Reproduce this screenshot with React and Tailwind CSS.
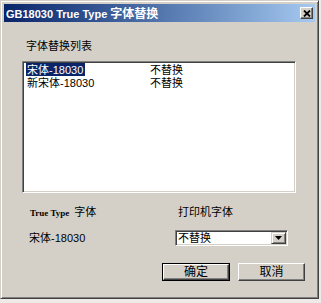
const cjk = { fontFamily: '"Liberation Sans", "Noto Sans CJK SC", sans-serif' };

function CloseButton() {
  return (
    <div className="w-[13px] h-[12px] bg-[#d4d0c8] border border-t-white border-l-white border-r-[#404040] border-b-[#404040] shadow-[inset_-1px_-1px_0_#808080] flex items-center justify-center">
      <svg width="8" height="7" viewBox="0 0 8 7">
        <path d="M1 0.5 L7 6.5 M7 0.5 L1 6.5" stroke="#000" strokeWidth="1.8" />
      </svg>
    </div>
  );
}

function PushButton({ label, isDefault }) {
  const bevel = 'bg-[#d4d0c8] border border-t-white border-l-white border-r-[#404040] border-b-[#404040] shadow-[inset_-1px_-1px_0_#808080]';
  return (
    <div className={isDefault ? 'border border-black' : ''}>
      <div className={`${bevel} ${isDefault ? 'w-[66px] h-[16px]' : 'w-[67px] h-[18px]'} flex items-center justify-center text-[12px] leading-none text-black`} style={cjk}>
        {label}
      </div>
    </div>
  );
}

export default function App() {
  const rows = [
    { name: '宋体-18030', printer: '不替换', selected: true },
    { name: '新宋体-18030', printer: '不替换' },
  ];

  return (
    <div className="w-[321px] h-[303px] bg-[#ecebe8]">
      <div className="w-[319px] h-[299px] bg-[#d4d0c8] border border-t-[#d4d0c8] border-l-[#d4d0c8] border-r-[#404040] border-b-[#404040] shadow-[inset_1px_1px_0_#fff,inset_-1px_-1px_0_#808080] p-[3px] flex flex-col">
        {/* Title bar */}
        <div className="h-[18px] shrink-0 bg-gradient-to-r from-[#0a246a] to-[#a6caf0] flex items-center justify-between pl-[2px] pr-[2px]">
          <div className="flex items-baseline text-white font-bold">
            <span className="text-[11px] leading-none" style={{ fontFamily: '"Liberation Sans", sans-serif' }}>GB18030 True Type</span>
            <span className="text-[12px] leading-none ml-[3px]" style={{ fontFamily: '"Noto Sans CJK SC", sans-serif' }}>字体替换</span>
          </div>
          <CloseButton />
        </div>

        {/* Client area */}
        <div className="flex flex-col pl-[18px] text-black" style={cjk}>
          <div className="mt-[18px] ml-[4px] text-[11px] leading-[13px]">字体替换列表</div>

          <div className="mt-[8px] w-[274px] h-[132px] bg-white border border-t-[#808080] border-l-[#808080] border-r-white border-b-white shadow-[inset_1px_1px_0_#404040,inset_-1px_-1px_0_#d4d0c8] pt-[1px] pl-[3px]">
            {rows.map((r) => (
              <div key={r.name} className="flex h-[13px] items-center text-[11px] leading-[12px]">
                <div className="w-[124px]">
                  <span className={r.selected ? 'bg-[#0a246a] text-white pl-[1px] pr-[2px] py-[0.5px]' : 'pl-[1px]'}>{r.name}</span>
                </div>
                <div>{r.printer}</div>
              </div>
            ))}
          </div>

          <div className="grid grid-cols-[153px_1fr] mt-[13px] leading-[13px]">
            <div className="pl-[8px] flex items-baseline">
              <span className="text-[9px] font-bold" style={{ fontFamily: '"Liberation Serif", serif' }}>True Type</span>
              <span className="text-[11px] ml-[5px]">字体</span>
            </div>
            <div className="pl-[3px] text-[11px]">打印机字体</div>
          </div>

          <div className="grid grid-cols-[153px_1fr] mt-[10px] items-center">
            <div className="pl-[7px] text-[11px] leading-[13px]">宋体-18030</div>
            <div className="w-[113px] h-[16px] bg-white border border-t-[#808080] border-l-[#808080] border-r-white border-b-white shadow-[inset_1px_1px_0_#404040,inset_-1px_-1px_0_#d4d0c8] flex items-center pl-[2px] pr-[1px]">
              <span className="flex-1 text-[11px] leading-none">不替换</span>
              <div className="w-[15px] h-[12px] bg-[#d4d0c8] border border-t-[#d4d0c8] border-l-[#d4d0c8] border-r-[#404040] border-b-[#404040] shadow-[inset_1px_1px_0_#fff,inset_-1px_-1px_0_#808080] flex items-center justify-center">
                <svg width="7" height="4" viewBox="0 0 7 4">
                  <path d="M0 0 H7 L3.5 4 Z" fill="#000" />
                </svg>
              </div>
            </div>
          </div>

          <div className="flex mt-[17px] pl-[140px] gap-[8px]">
            <PushButton label="确定" isDefault />
            <PushButton label="取消" />
          </div>
        </div>
      </div>
    </div>
  );
}
